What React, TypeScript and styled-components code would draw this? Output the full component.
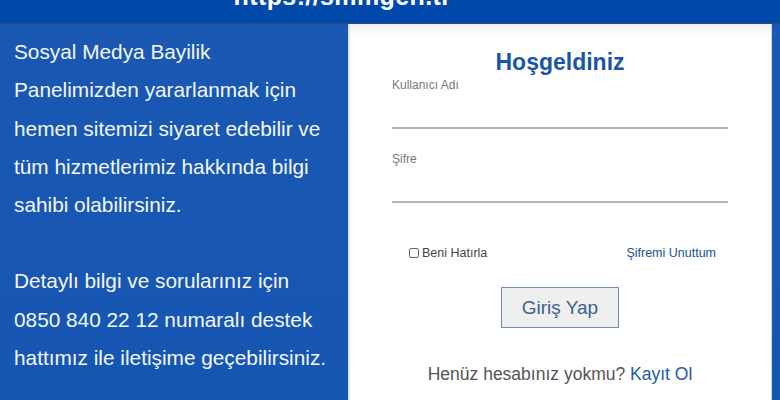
import styled, {createGlobalStyle} from "styled-components";

const Global = createGlobalStyle`
  html, body {
    margin: 0;
    padding: 0;
    background: #1656b3;
    font-family: "Liberation Sans", Arial, sans-serif;
  }
`;

const Page = styled.div`
  width: 780px;
  height: 400px;
  overflow: hidden;
  display: flex;
  flex-direction: column;
  background: linear-gradient(180deg, #1a58b2 0%, #1656b3 100%);
`;

const Header = styled.div`
  height: 22px;
  flex-shrink: 0;
  overflow: hidden;
  background: #0049ab;
  display: flex;
  justify-content: center;
  box-shadow: 0 1px 2px rgba(0, 30, 90, 0.5);
`;

const SiteUrl = styled.div`
  margin-top: -17px;
  margin-left: -95px;
  color: #fff;
  font-weight: bold;
  font-size: 25px;
  line-height: 26px;
  letter-spacing: 0.4px;
`;

const Main = styled.div`
  flex: 1;
  display: flex;
  min-height: 0;
`;

const Intro = styled.div`
  width: 334px;
  padding: 11px 0 0 14px;
  color: #f4f7fc;
  font-size: 20.8px;
  line-height: 38.3px;
`;

const Paragraph = styled.p`
  margin: 0 0 38px;
  white-space: nowrap;
`;

const Card = styled.div`
  flex: 1;
  margin: 2px 8px 0 0;
  background: linear-gradient(180deg, #f0f0f0 0px, #fff 14px);
  border-left: 2px solid #dfe6f2;
  border-right: 1px solid #c9d6ea;
  padding: 0 43px 0 42px;
  display: flex;
  flex-direction: column;
`;

const Title = styled.h1`
  margin: 23px 0 0;
  text-align: center;
  color: #1a55a6;
  font-size: 23px;
  line-height: 30px;
  font-weight: bold;
`;

const Field = styled.div<{ $top: number }>`
  margin-top: ${p => p.$top}px;
  display: flex;
  flex-direction: column;
`;

const Label = styled.label`
  color: #777;
  font-size: 12px;
  line-height: 14px;
`;

const Input = styled.input`
  border: none;
  border-bottom: 2px solid #b4b4b4;
  height: 28px;
  margin-top: 7px;
  padding: 0;
  outline: none;
  background: transparent;
  font-size: 14px;
`;

const OptionsRow = styled.div`
  margin-top: 43px;
  padding: 0 12px 0 17px;
  display: flex;
  justify-content: space-between;
  align-items: center;
  font-size: 12.5px;
`;

const Remember = styled.label`
  display: flex;
  align-items: center;
  gap: 3px;
  color: #444;
`;

const Box = styled.span`
  width: 8px;
  height: 8px;
  border: 1px solid #666;
  border-radius: 2px;
  background: #fff;
`;

const Link = styled.a`
  color: #1a4f99;
  text-decoration: none;
`;

const Button = styled.button`
  align-self: center;
  margin-top: 27px;
  width: 118px;
  height: 41px;
  border: 1px solid #6f8dba;
  background: #efefef;
  color: #3c5f93;
  font-family: inherit;
  font-size: 19px;
`;

const SignUp = styled.div`
  margin-top: 36px;
  text-align: center;
  color: #555;
  font-size: 17.5px;
`;

const SignUpLink = styled.a`
  color: #1c5ba8;
  text-decoration: none;
`;

export default function App() {
    return (
        <Page>
            <Global/>
            <Header>
                <SiteUrl>https://smmgen.tr</SiteUrl>
            </Header>
            <Main>
                <Intro>
                    <Paragraph>
                        Sosyal Medya Bayilik<br/>
                        Panelimizden yararlanmak için<br/>
                        hemen sitemizi siyaret edebilir ve<br/>
                        tüm hizmetlerimiz hakkında bilgi<br/>
                        sahibi olabilirsiniz.
                    </Paragraph>
                    <Paragraph>
                        Detaylı bilgi ve sorularınız için<br/>
                        0850 840 22 12 numaralı destek<br/>
                        hattımız ile iletişime geçebilirsiniz.
                    </Paragraph>
                </Intro>
                <Card>
                    <Title>Hoşgeldiniz</Title>
                    <Field $top={1}>
                        <Label>Kullanıcı Adı</Label>
                        <Input type="text"/>
                    </Field>
                    <Field $top={23}>
                        <Label>Şifre</Label>
                        <Input type="password"/>
                    </Field>
                    <OptionsRow>
                        <Remember><Box/>Beni Hatırla</Remember>
                        <Link href="#">Şifremi Unuttum</Link>
                    </OptionsRow>
                    <Button>Giriş Yap</Button>
                    <SignUp>
                        Henüz hesabınız yokmu? <SignUpLink href="#">Kayıt Ol</SignUpLink>
                    </SignUp>
                </Card>
            </Main>
        </Page>
    );
}
